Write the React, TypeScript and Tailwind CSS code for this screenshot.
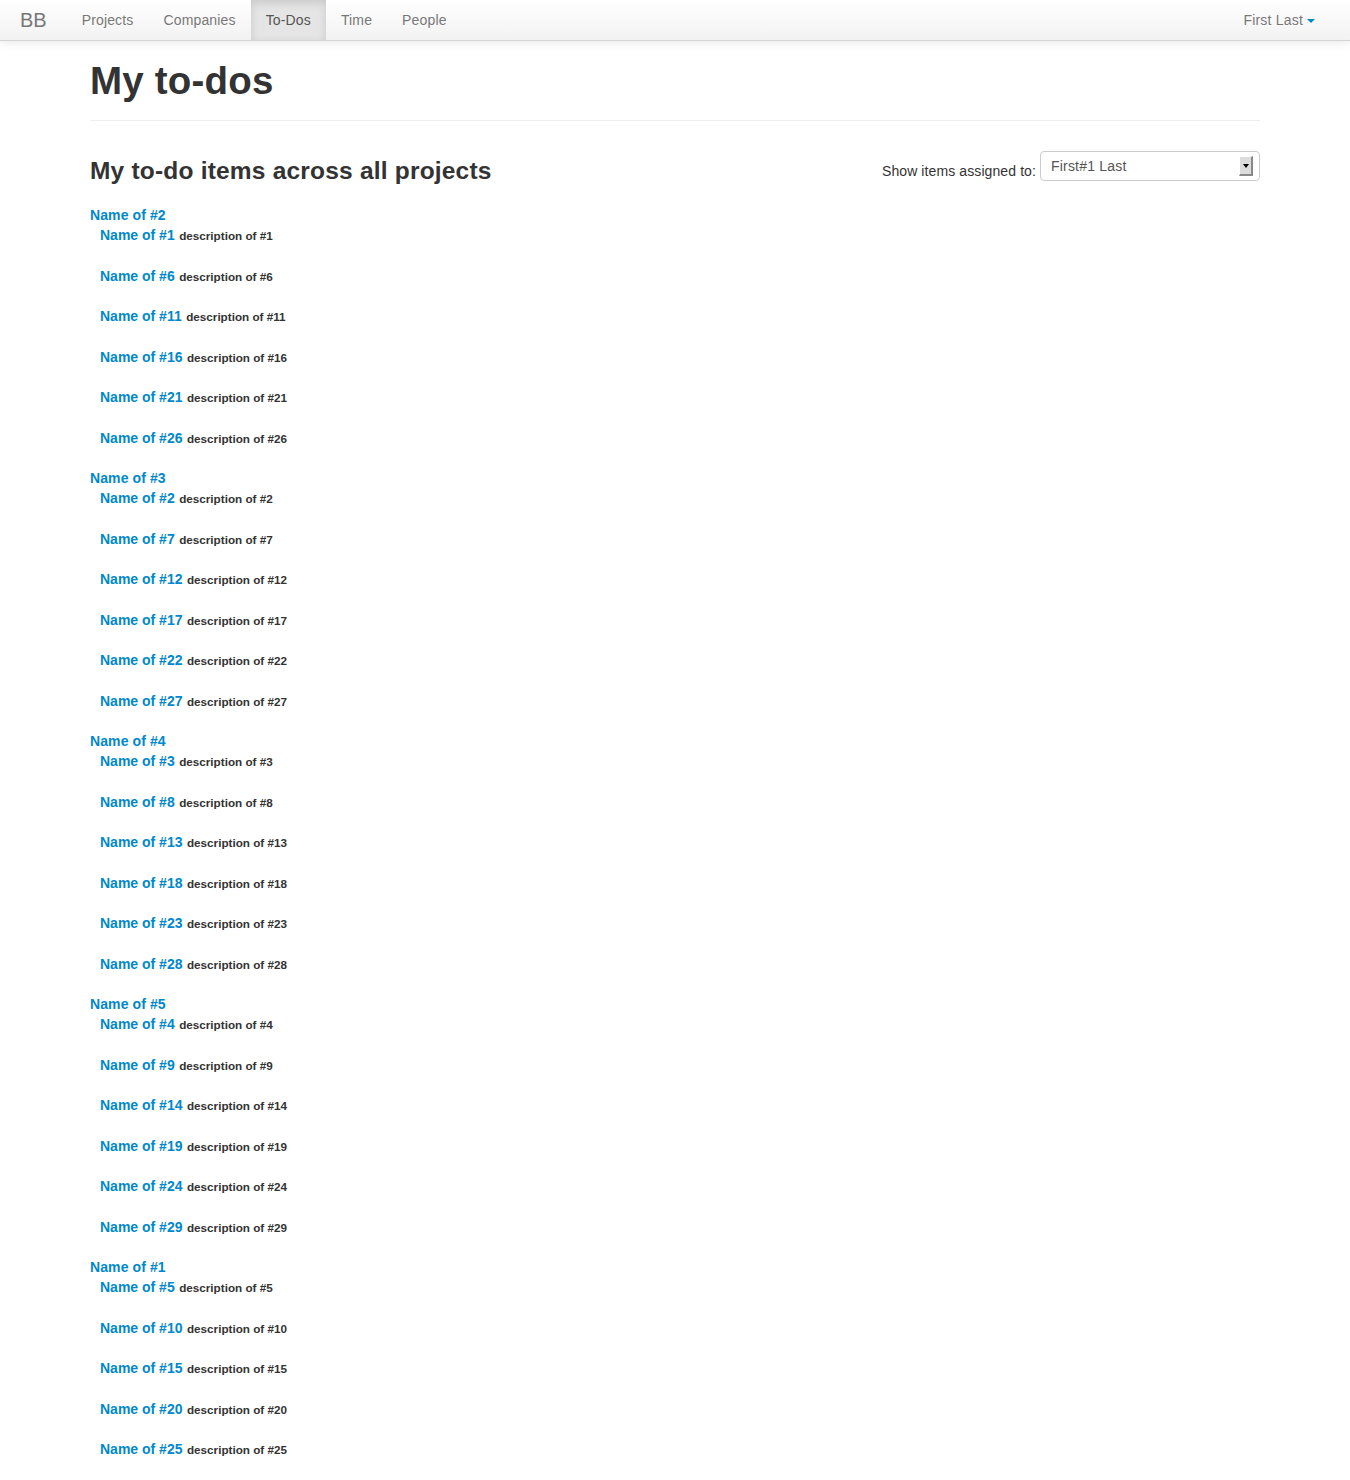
const groups = [
  { id: 2, items: [1, 6, 11, 16, 21, 26] },
  { id: 3, items: [2, 7, 12, 17, 22, 27] },
  { id: 4, items: [3, 8, 13, 18, 23, 28] },
  { id: 5, items: [4, 9, 14, 19, 24, 29] },
  { id: 1, items: [5, 10, 15, 20, 25, 30] },
];

const navLinks = ["Projects", "Companies", "To-Dos", "Time", "People"];

const Navbar = () => {
  return (
    <div className="h-[41px] border-b border-[#d4d4d4] bg-gradient-to-b from-white to-[#f2f2f2] shadow-[0_1px_10px_rgba(0,0,0,0.1)] flex items-stretch px-0">
      <a className="px-5 flex items-center text-[20px] font-extralight text-[#777] leading-[20px]">BB</a>
      <ul className="flex items-stretch">
        {navLinks.map((l) => (
          <li key={l} className="flex">
            <a
              className={
                l === "To-Dos"
                  ? "px-[15px] flex items-center text-[14px] tracking-[0.15px] text-[#555] bg-[#e5e5e5] shadow-[inset_0_3px_8px_rgba(0,0,0,0.125)]"
                  : "px-[15px] flex items-center text-[14px] tracking-[0.15px] text-[#777] [text-shadow:0_1px_0_#fff]"
              }
            >
              {l}
            </a>
          </li>
        ))}
      </ul>
      <div className="ml-auto mr-5 flex">
        <a className="px-[15px] flex items-center text-[14px] tracking-[0.2px] text-[#777] [text-shadow:0_1px_0_#fff]">
          First Last
          <span className="ml-[4px] mt-[1px] w-0 h-0 border-t-[4px] border-t-[#0088cc] border-x-[4px] border-x-transparent"></span>
        </a>
      </div>
    </div>
  );
};

const AssignedSelect = () => {
  return (
    <div className="flex items-start">
      <label className="text-[14px] tracking-[0.1px] text-[#333] mt-[10px] mr-[4px]">Show items assigned to:</label>
      <div className="w-[220px] h-[30px] border border-[#ccc] rounded-[4px] bg-white flex items-center pl-[10px] pr-[6px]">
        <span className="text-[14px] tracking-[0.2px] text-[#555]">First#1 Last</span>
        <span className="ml-auto w-[14px] h-[20px] bg-[#dcdcdc] border-t border-l border-t-white border-l-white border-b-2 border-r-2 border-b-[#888] border-r-[#888] flex items-center justify-center">
          <span className="w-0 h-0 border-t-[4px] border-t-black border-x-[3px] border-x-transparent"></span>
        </span>
      </div>
    </div>
  );
};

const App = () => {
  return (
    <div className="min-h-screen bg-white font-['Liberation_Sans',Arial,sans-serif] text-[#333]">
      <Navbar />
      <div className="w-[1170px] mx-auto">
        <div className="mt-[20px] pb-[9px] border-b border-[#eee] mb-[30px]">
          <h1 className="text-[38.5px] font-bold leading-[40px] tracking-[0.2px] mb-[10px]">My to-dos</h1>
        </div>
        <div className="flex justify-between items-start">
          <h3 className="text-[24.5px] font-bold leading-[40px] tracking-[0.2px]">My to-do items across all projects</h3>
          <AssignedSelect />
        </div>
        <div className="mt-[14px]">
          {groups.map((g) => (
            <div key={g.id}>
              <a className="block text-[14px] font-bold leading-[20px] tracking-[0.1px] text-[#0088cc]">Name of #{g.id}</a>
              <ul className="pl-[10px]">
                {g.items.map((i) => (
                  <li key={i} className="h-[20px] leading-[20px] mb-[20.5px] whitespace-nowrap">
                    <a className="text-[14px] font-bold text-[#0088cc]">Name of #{i}</a>{" "}
                    <small className="text-[11.7px] font-bold text-[#333]">description of #{i}</small>
                  </li>
                ))}
              </ul>
            </div>
          ))}
        </div>
      </div>
    </div>
  );
};

export default App;
